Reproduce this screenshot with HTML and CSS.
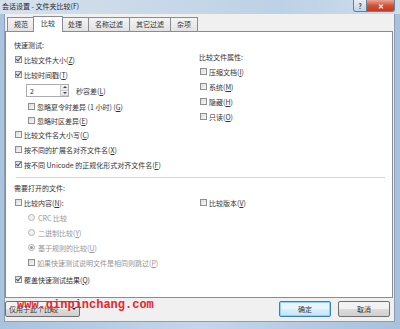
FILE: index.html
```html
<!DOCTYPE html>
<html>

<head>
    <meta charset="utf-8">
    <title>会话设置 - 文件夹比较</title>
    <link rel="stylesheet" href="styles.css">
</head>

<body>

    <div class="window">
        <div class="titlebar">
            <span class="title">会话设置 - 文件夹比较(F)</span>
            <div class="caption">
                <span class="cap help">?</span>
                <span class="cap close">✕</span>
            </div>
        </div>

        <div class="client">
            <div class="tabs">
                <span class="tab">规范</span>
                <span class="tab active">比较</span>
                <span class="tab">处理</span>
                <span class="tab">名称过滤</span>
                <span class="tab">其它过滤</span>
                <span class="tab">杂项</span>
            </div>

            <div class="panel">
                <div class="section top">
                    <div class="col left">
                        <div class="row">快速测试:</div>
                        <div class="row"><span class="box on"></span>比较文件大小(<u>Z</u>)</div>
                        <div class="row"><span class="box on"></span>比较时间戳(<u>T</u>)</div>
                        <div class="row spin-row">
                            <div class="spin">
                                <span class="val">2</span>
                                <span class="arrows"><i class="up"></i><i class="down"></i></span>
                            </div>
                            <span>秒容差(<u>L</u>)</span>
                        </div>
                        <div class="row sub"><span class="box"></span>忽略夏令时差异 (1 小时) (<u>G</u>)</div>
                        <div class="row sub short"><span class="box"></span>忽略时区差异(<u>E</u>)</div>
                        <div class="row"><span class="box"></span>比较文件名大小写(<u>C</u>)</div>
                        <div class="row"><span class="box"></span>按不同的扩展名对齐文件名(<u>X</u>)</div>
                        <div class="row"><span class="box on"></span>按不同 Unicode 的正规化形式对齐文件名(<u>F</u>)</div>
                    </div>
                    <div class="col right">
                        <div class="row">比较文件属性:</div>
                        <div class="row"><span class="box"></span>压缩文档(<u>I</u>)</div>
                        <div class="row"><span class="box"></span>系统(<u>M</u>)</div>
                        <div class="row"><span class="box"></span>隐藏(<u>H</u>)</div>
                        <div class="row"><span class="box"></span>只读(<u>O</u>)</div>
                    </div>
                </div>

                <div class="sep"></div>

                <div class="section bottom">
                    <div class="col left">
                        <div class="row">需要打开的文件:</div>
                        <div class="row"><span class="box"></span>比较内容(<u>N</u>):</div>
                        <div class="row sub dim"><span class="radio"></span>CRC 比较</div>
                        <div class="row sub dim"><span class="radio"></span>二进制比较(<u>Y</u>)</div>
                        <div class="row sub dim"><span class="radio on"></span>基于规则的比较(<u>U</u>)</div>
                        <div class="row sub dim"><span class="box"></span>如果快速测试说明文件是相同则跳过(<u>P</u>)</div>
                        <div class="row last"><span class="box on"></span>覆盖快速测试结果(<u>Q</u>)</div>
                    </div>
                    <div class="col right">
                        <div class="row gap"><span class="box"></span>比较版本(<u>V</u>)</div>
                    </div>
                </div>
            </div>

            <div class="footer">
                <button class="btn drop">仅用于此个比较<span class="caret"></span></button>
                <div class="actions">
                    <button class="btn default">确定</button>
                    <button class="btn">取消</button>
                </div>
            </div>

            <div class="mark">www.qinpinchang.com</div>
        </div>
    </div>

</body>

</html>
```

FILE: styles.css
```css
* {
    margin: 0px;
    padding: 0px;
    box-sizing: border-box;
}

body {
    width: 400px;
    height: 329px;
    overflow: hidden;
    font-family: "Noto Sans CJK SC", "Liberation Sans", sans-serif;
    font-size: 7px;
    color: #333;
    background: #b9cfe6;
}

u {
    text-decoration: underline;
}

.window {
    width: 400px;
    height: 329px;
    display: flex;
    flex-direction: column;
    background: linear-gradient(to right, #aac3de, #c4d6ea 50%, #a8c1dc);
}

.titlebar {
    height: 14px;
    display: flex;
    justify-content: space-between;
    align-items: flex-start;
    padding-left: 2px;
    padding-right: 5px;
    background: linear-gradient(to right, #d6e1ec, #c8d8e8 40%, #bdd1e6 70%, #cddcec);
}

.title {
    line-height: 13px;
    color: #2a2a2a;
}

.caption {
    display: flex;
}

.cap {
    height: 12px;
    display: flex;
    align-items: center;
    justify-content: center;
    border: 1px solid #6d7f96;
    border-top: none;
    font-size: 7px;
}

.help {
    width: 14px;
    background: linear-gradient(#e9eef4, #c6d3e2);
    border-radius: 0 0 0 3px;
    color: #33475f;
    font-weight: bold;
}

.close {
    width: 28px;
    background: linear-gradient(#e9a595, #d1523a 50%, #c13b22);
    border-left: none;
    border-radius: 0 0 3px 0;
    color: #fff;
    font-weight: bold;
}

.client {
    position: relative;
    flex: 1;
    margin: 0 5px 7px 4px;
    background: #f0f0f0;
    display: flex;
    flex-direction: column;
    border: 1px solid #8a9db4;
    border-top: none;
}

.tabs {
    display: flex;
    align-items: flex-end;
    height: 17px;
    padding-left: 2px;
}

.tab {
    height: 14px;
    line-height: 13px;
    padding: 0 6px;
    border: 1px solid #898c95;
    border-bottom: none;
    margin-right: -1px;
    background: linear-gradient(#f4f4f4, #e2e2e2);
}

.tab.active {
    position: relative;
    height: 16px;
    margin-left: -1px;
    margin-right: -2px;
    padding: 0 7px;
    background: #fff;
    z-index: 1;
    margin-bottom: -1px;
}

.panel {
    height: 267px;
    margin: 0 1px 0 0;
    background: #fff;
    border: 1px solid #898c95;
    padding: 5px 7px 0 8px;
}

.section {
    display: flex;
}

.col.left {
    width: 185px;
}

.col.right {
    padding-top: 12px;
}

.bottom .col.right {
    padding-top: 0;
}

.row {
    height: 15px;
    display: flex;
    align-items: center;
    white-space: nowrap;
}

.row.sub {
    padding-left: 13px;
}

.row.short {
    height: 13px;
}

.row.dim {
    color: #959595;
}

.row.gap {
    margin-top: 15px;
}

.row.last {
    margin-top: 2px;
}

.box {
    width: 7px;
    height: 7px;
    margin: 0 2px 0 1px;
    border: 1px solid #8f8f8f;
    background: linear-gradient(135deg, #dcdcdc, #f8f8f8);
    position: relative;
    flex: none;
}

.box.on::after {
    content: "";
    position: absolute;
    left: 1px;
    top: -1px;
    width: 2px;
    height: 4px;
    border: solid #3a4f78;
    border-width: 0 1px 1px 0;
    transform: rotate(40deg);
}

.radio {
    width: 7px;
    height: 7px;
    margin: 0 3px 0 1px;
    border: 1px solid #b4b4b4;
    border-radius: 50%;
    background: #f2f2f2;
    position: relative;
    flex: none;
}

.radio.on::after {
    content: "";
    position: absolute;
    left: 1px;
    top: 1px;
    width: 3px;
    height: 3px;
    border-radius: 50%;
    background: #9a9a9a;
}

.spin-row {
    height: 17px;
    padding-left: 12px;
    gap: 7px;
}

.spin {
    width: 43px;
    height: 13px;
    border: 1px solid #abadb3;
    display: flex;
    justify-content: space-between;
    align-items: center;
    padding-left: 3px;
}

.arrows {
    width: 8px;
    height: 11px;
    display: flex;
    flex-direction: column;
    border-left: 1px solid #c9c9c9;
}

.arrows i {
    flex: 1;
    position: relative;
    background: linear-gradient(#f6f6f6, #e4e4e4);
    border-bottom: 1px solid #d0d0d0;
}

.arrows i::after {
    content: "";
    position: absolute;
    left: 2px;
    top: 1px;
    border-left: 2px solid transparent;
    border-right: 2px solid transparent;
}

.arrows .up::after {
    border-bottom: 2px solid #444;
}

.arrows .down::after {
    border-top: 2px solid #444;
}

.sep {
    height: 1px;
    background: #d5d5d5;
    margin: 5px 0 2px 2px;
}

.footer {
    display: flex;
    justify-content: space-between;
    align-items: center;
    padding: 3px 0 0 0;
}

.btn {
    height: 16px;
    font-family: inherit;
    font-size: 7px;
    color: #333;
    border: 1px solid #707070;
    border-radius: 2px;
    background: linear-gradient(#f2f2f2 50%, #dddddd 50%, #cfcfcf);
    width: 52px;
}

.btn.drop {
    width: 75px;
    text-align: left;
    padding-left: 3px;
    display: flex;
    align-items: center;
    justify-content: space-between;
    padding-right: 3px;
}

.caret {
    border-left: 2px solid transparent;
    border-right: 2px solid transparent;
    border-top: 2px solid #222;
}

.btn.default {
    border-color: #3c7fb1;
    box-shadow: inset 0 0 0 1px #8fd3f6;
    background: linear-gradient(#eaf6fd 50%, #d9f0fc 50%, #bee6fd);
}

.actions {
    display: flex;
    gap: 7px;
    padding-right: 4px;
}

.mark {
    position: absolute;
    left: 12px;
    top: 284px;
    font-family: "Liberation Mono", monospace;
    font-size: 12px;
    font-weight: bold;
    color: #e5262b;
}
```
